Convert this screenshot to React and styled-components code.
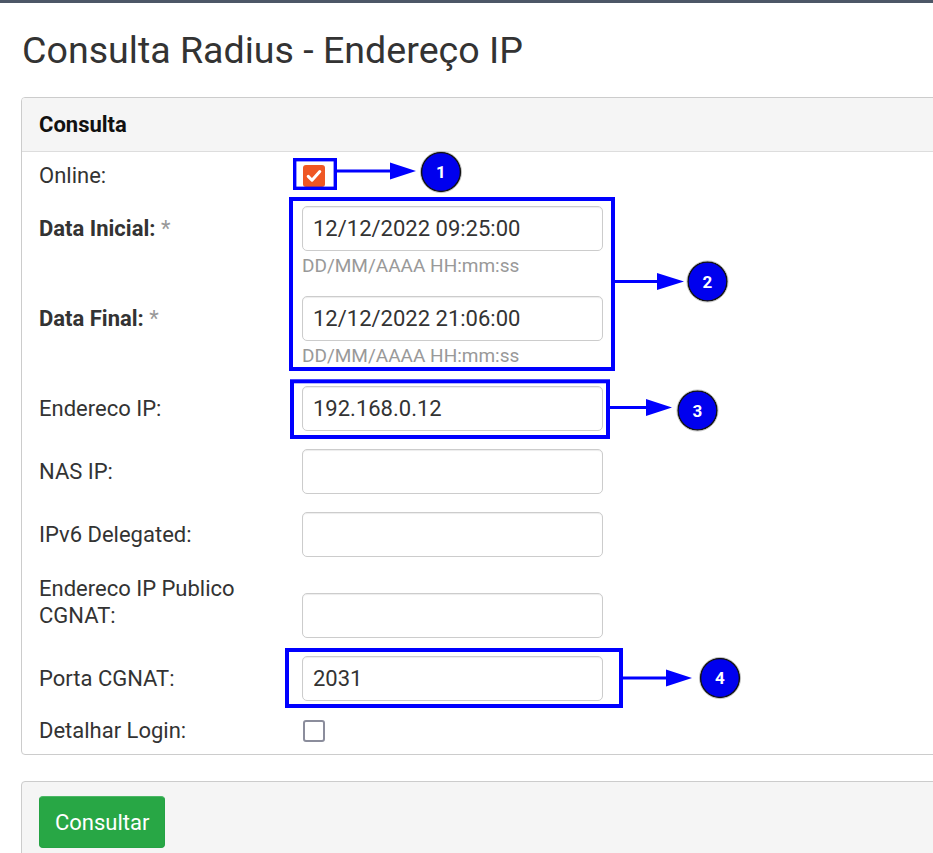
import React from "react";
import styled, { createGlobalStyle } from "styled-components";

const GlobalStyle = createGlobalStyle`
    html, body{
        margin: 0;
        padding: 0;
        overflow: hidden;
        background: #fff;
        font-family: Roboto, "Liberation Sans", sans-serif;
        color: #333;
    }
`

const Page = styled.div`
    position: relative;
    width: 933px;
    min-height: 853px;
`

const TopBar = styled.div`
    height: 3px;
    background-color: #4d5767;
`

const Content = styled.div`
    width: 1000px;
    padding-left: 21px;
`

const Title = styled.h1`
    margin: 27px 0 27px 1px;
    font-size: 37.6px;
    line-height: 40px;
    font-weight: 400;
    color: #333;
`

const Panel = styled.div`
    border: 1px solid #ccc;
    border-radius: 4px;
    background-color: ${(p) => (p.$muted ? "#f5f5f5" : "#fff")};
    margin-top: ${(p) => (p.$gap ? "26px" : "0")};
    overflow: hidden;
`

const PanelHeader = styled.div`
    height: 53px;
    line-height: 53px;
    padding: 0 17px;
    background-color: #f5f5f5;
    border-bottom: 1px solid #ddd;
    font-size: 22px;
    font-weight: 700;
    color: #111;
`

const PanelBody = styled.div`
    padding: 12px 17px 11px;
    display: flex;
    flex-direction: column;
    gap: 18px;
`

const PanelFooter = styled.div`
    padding: 14px 17px;
`

const Row = styled.div`
    display: flex;
    flex-direction: column;
`

const Line = styled.div`
    display: flex;
    align-items: ${(p) => (p.$check ? "center" : "flex-end")};
    min-height: 24px;
`

const Label = styled.label`
    width: 248px;
    flex: 0 0 248px;
    margin-right: 15px;
    font-size: 22px;
    line-height: ${(p) => (p.$check ? "24px" : "27px")};
    padding-bottom: ${(p) => (p.$check ? "0" : "9px")};
    font-weight: ${(p) => (p.$required ? 700 : 400)};
    color: #333;
    span{
        font-weight: 400;
        color: #999;
    }
`

const Input = styled.input`
    box-sizing: border-box;
    width: 301px;
    height: 45px;
    padding: 0 10px;
    border: 1px solid #ccc;
    border-radius: 5px;
    box-shadow: inset 0 1px 1px rgba(0,0,0,.075);
    font-family: Roboto, "Liberation Sans", sans-serif;
    font-size: 22px;
    color: #333;
    outline: none;
`

const Help = styled.div`
    margin: 3px 0 0 263px;
    font-size: 19px;
    line-height: 24px;
    color: #999;
`

const Check = styled.span`
    box-sizing: border-box;
    width: 22px;
    height: 22px;
    border-radius: 3px;
    display: inline-flex;
    align-items: center;
    justify-content: center;
    margin-left: 1px;
    background-color: ${(p) => (p.$checked ? "#ef5724" : "#fff")};
    border: ${(p) => (p.$checked ? "none" : "2px solid #8b8d9c")};
`

const Button = styled.button`
    height: 52px;
    padding: 0 15px;
    border: 1px solid #25a244;
    border-top-color: #4cb866;
    border-radius: 4px;
    background-color: #28a745;
    color: #fff;
    font-family: Roboto, "Liberation Sans", sans-serif;
    font-size: 22px;
`

const Overlay = styled.svg`
    position: absolute;
    left: 0;
    top: 0;
    pointer-events: none;
`

const CheckMark = () => (
    <svg width="16" height="14" viewBox="0 0 16 14">
        <path d="M2.2 7.4 L6 11.2 L13.8 2.6" fill="none" stroke="#fff" strokeWidth="3" strokeLinecap="round" strokeLinejoin="round" />
    </svg>
);

// quadros, setas e numeros de anotacao
const frames = [
    { x: 294.7, y: 159.7, w: 40.6, h: 28.6, t: 3.4 },
    { x: 291, y: 199, w: 322, h: 170, t: 4 },
    { x: 292, y: 381.3, w: 316, h: 55.7, t: 4 },
    { x: 287, y: 650, w: 334, h: 56, t: 4 },
];

const arrows = [
    { x1: 337, base: 390, tip: 416, y: 171 },
    { x1: 615, base: 657, tip: 684, y: 281.5 },
    { x1: 610, base: 646, tip: 672, y: 407.5 },
    { x1: 623, base: 666, tip: 692, y: 678 },
];

const badges = [
    { n: 1, cx: 441, cy: 172 },
    { n: 2, cx: 707.5, cy: 281.5 },
    { n: 3, cx: 697.5, cy: 410.5 },
    { n: 4, cx: 720, cy: 678 },
];

const Annotations = () => (
    <Overlay width="933" height="853">
        {frames.map((f, i) => (
            <rect key={i} x={f.x} y={f.y} width={f.w} height={f.h} fill="none" stroke="#0000ff" strokeWidth={f.t} />
        ))}
        {arrows.map((a, i) => (
            <g key={i}>
                <line x1={a.x1} y1={a.y} x2={a.base + 2} y2={a.y} stroke="#0000ff" strokeWidth="3" />
                <polygon points={`${a.base},${a.y - 8.5} ${a.tip},${a.y} ${a.base},${a.y + 8.5}`} fill="#0000ff" />
            </g>
        ))}
        {badges.map((b) => (
            <g key={b.n}>
                <circle cx={b.cx} cy={b.cy} r="19.5" fill="#0000ee" stroke="#111" strokeWidth="1.6" />
                <circle cx={b.cx} cy={b.cy} r="20.6" fill="none" stroke="#bbb" strokeWidth="0.8" />
                <text x={b.cx} y={b.cy + 6} textAnchor="middle" fill="#fff" fontSize="17" fontWeight="700" fontFamily="Roboto, 'Liberation Sans', sans-serif">{b.n}</text>
            </g>
        ))}
    </Overlay>
);

const fields = [
    { label: "Endereco IP:", value: "192.168.0.12" },
    { label: "NAS IP:", value: "" },
    { label: "IPv6 Delegated:", value: "" },
    { label: "Endereco IP Publico CGNAT:", value: "" },
    { label: "Porta CGNAT:", value: "2031" },
];

const App = () => {
    return (
        <Page>
            <GlobalStyle />
            <TopBar />
            <Content>
                <Title>Consulta Radius - Endereço IP</Title>
                <Panel>
                    <PanelHeader>Consulta</PanelHeader>
                    <PanelBody>
                        <Row>
                            <Line $check>
                                <Label $check>Online:</Label>
                                <Check $checked><CheckMark /></Check>
                            </Line>
                        </Row>
                        <Row>
                            <Line>
                                <Label $required>Data Inicial: <span>*</span></Label>
                                <Input readOnly defaultValue="12/12/2022 09:25:00" />
                            </Line>
                            <Help>DD/MM/AAAA HH:mm:ss</Help>
                        </Row>
                        <Row>
                            <Line>
                                <Label $required>Data Final: <span>*</span></Label>
                                <Input readOnly defaultValue="12/12/2022 21:06:00" />
                            </Line>
                            <Help>DD/MM/AAAA HH:mm:ss</Help>
                        </Row>
                        {fields.map((f) => (
                            <Row key={f.label}>
                                <Line>
                                    <Label>{f.label}</Label>
                                    <Input readOnly defaultValue={f.value} />
                                </Line>
                            </Row>
                        ))}
                        <Row>
                            <Line $check>
                                <Label $check>Detalhar Login:</Label>
                                <Check />
                            </Line>
                        </Row>
                    </PanelBody>
                </Panel>
                <Panel $muted $gap>
                    <PanelFooter>
                        <Button>Consultar</Button>
                    </PanelFooter>
                </Panel>
            </Content>
            <Annotations />
        </Page>
    );
};

export default App;
